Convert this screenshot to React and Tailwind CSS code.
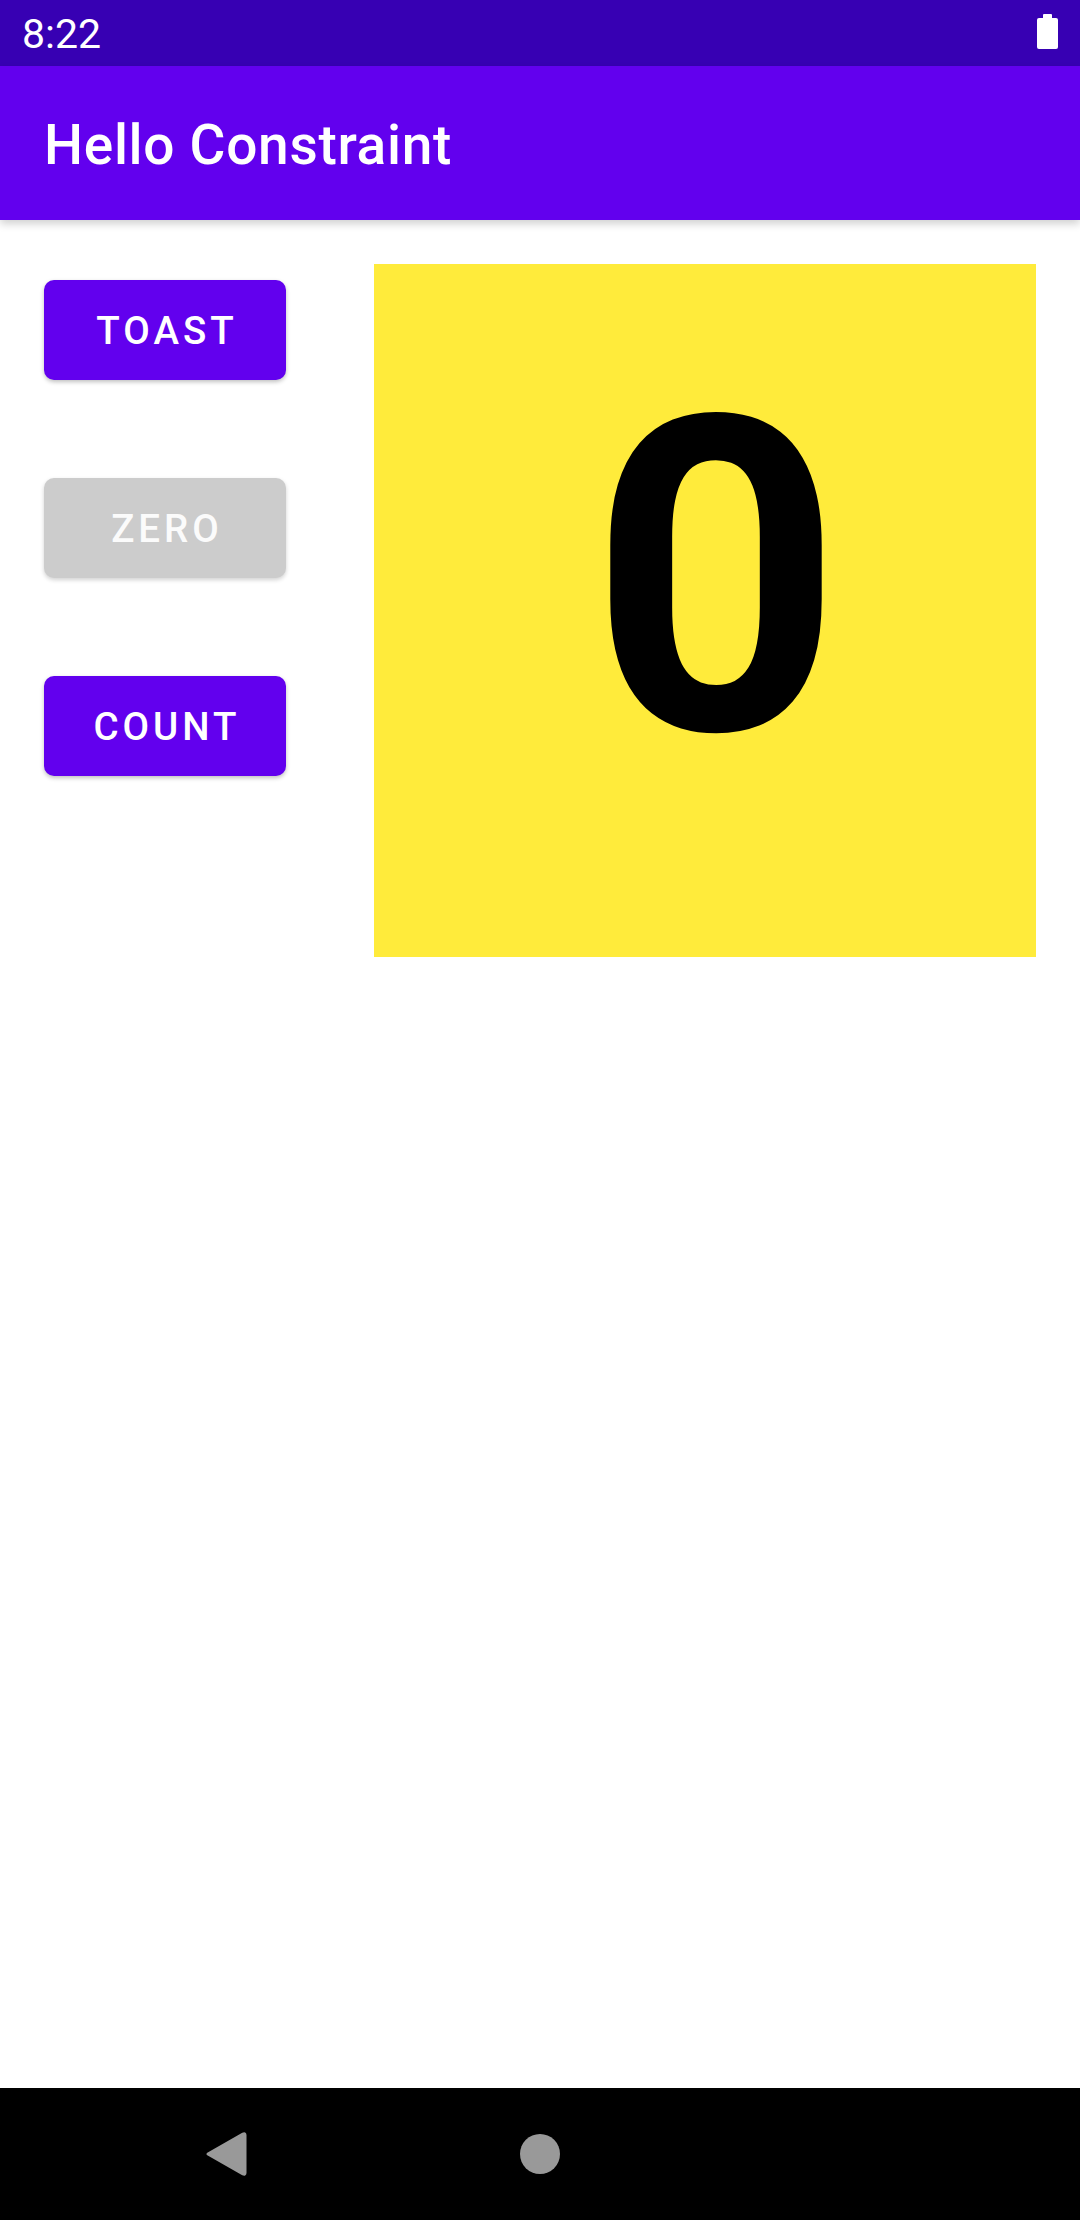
export default function App() {
  const font = { fontFamily: 'Roboto, "Noto Sans", sans-serif' };

  return (
    <div className="flex flex-col w-[1080px] h-[2220px] bg-white overflow-hidden" style={font}>
      {/* Status bar */}
      <div className="flex items-center justify-between h-[66px] bg-[#3700B3] pl-[22px] pr-[22px] text-white">
        <span className="text-[41px] leading-none mt-[2px]">8:22</span>
        <svg width="21" height="36" viewBox="0 0 21 36" className="-mt-[2px]">
          <rect x="6" y="0" width="9" height="5" rx="1" fill="#fff" />
          <rect x="0" y="4" width="21" height="31" rx="2" fill="#fff" />
        </svg>
      </div>

      {/* App bar */}
      <div className="relative z-10 flex items-center h-[154px] bg-[#6200EE] pl-[44px] shadow-[0_4px_8px_rgba(0,0,0,0.18)]">
        <h1 className="text-white text-[55px] font-medium leading-none tracking-[0.7px] mt-[4px]">Hello Constraint</h1>
      </div>

      {/* Content */}
      <div className="flex-1 flex items-start pl-[44px] pr-[44px] pt-[44px]">
        <div className="flex flex-col gap-[98px] w-[242px] mt-[16px]">
          <button className="h-[100px] rounded-[10px] bg-[#6200EE] text-white text-[38.5px] font-medium tracking-[4px] pl-[4px] pt-[2px] shadow-[0_2px_4px_rgba(0,0,0,0.25)]">
            TOAST
          </button>
          <button className="h-[100px] rounded-[10px] bg-[#CCCCCC] text-[#fbfbfb] text-[38.5px] font-medium tracking-[4px] pl-[4px] pt-[2px] shadow-[0_2px_4px_rgba(0,0,0,0.18)]">
            ZERO
          </button>
          <button className="h-[100px] rounded-[10px] bg-[#6200EE] text-white text-[38.5px] font-medium tracking-[4px] pl-[4px] pt-[2px] shadow-[0_2px_4px_rgba(0,0,0,0.25)]">
            COUNT
          </button>
        </div>

        <div className="ml-auto w-[662px] h-[693px] bg-[#FFEB3B] flex justify-center pt-[95px] pl-[22px]">
          <span className="text-black text-[440px] font-bold leading-none">0</span>
        </div>
      </div>

      {/* Navigation bar */}
      <div className="relative h-[132px] bg-black">
        <svg width="44" height="50" viewBox="0 0 44 50" className="absolute left-[204px] top-[41px]">
          <path d="M4 25 L39 5 Q41 4 41 6 L41 44 Q41 46 39 45 Z" fill="#999" stroke="#999" strokeWidth="3" strokeLinejoin="round" />
        </svg>
        <div className="absolute left-[520px] top-[46px] w-[40px] h-[40px] rounded-full bg-[#999]" />
      </div>
    </div>
  );
}
